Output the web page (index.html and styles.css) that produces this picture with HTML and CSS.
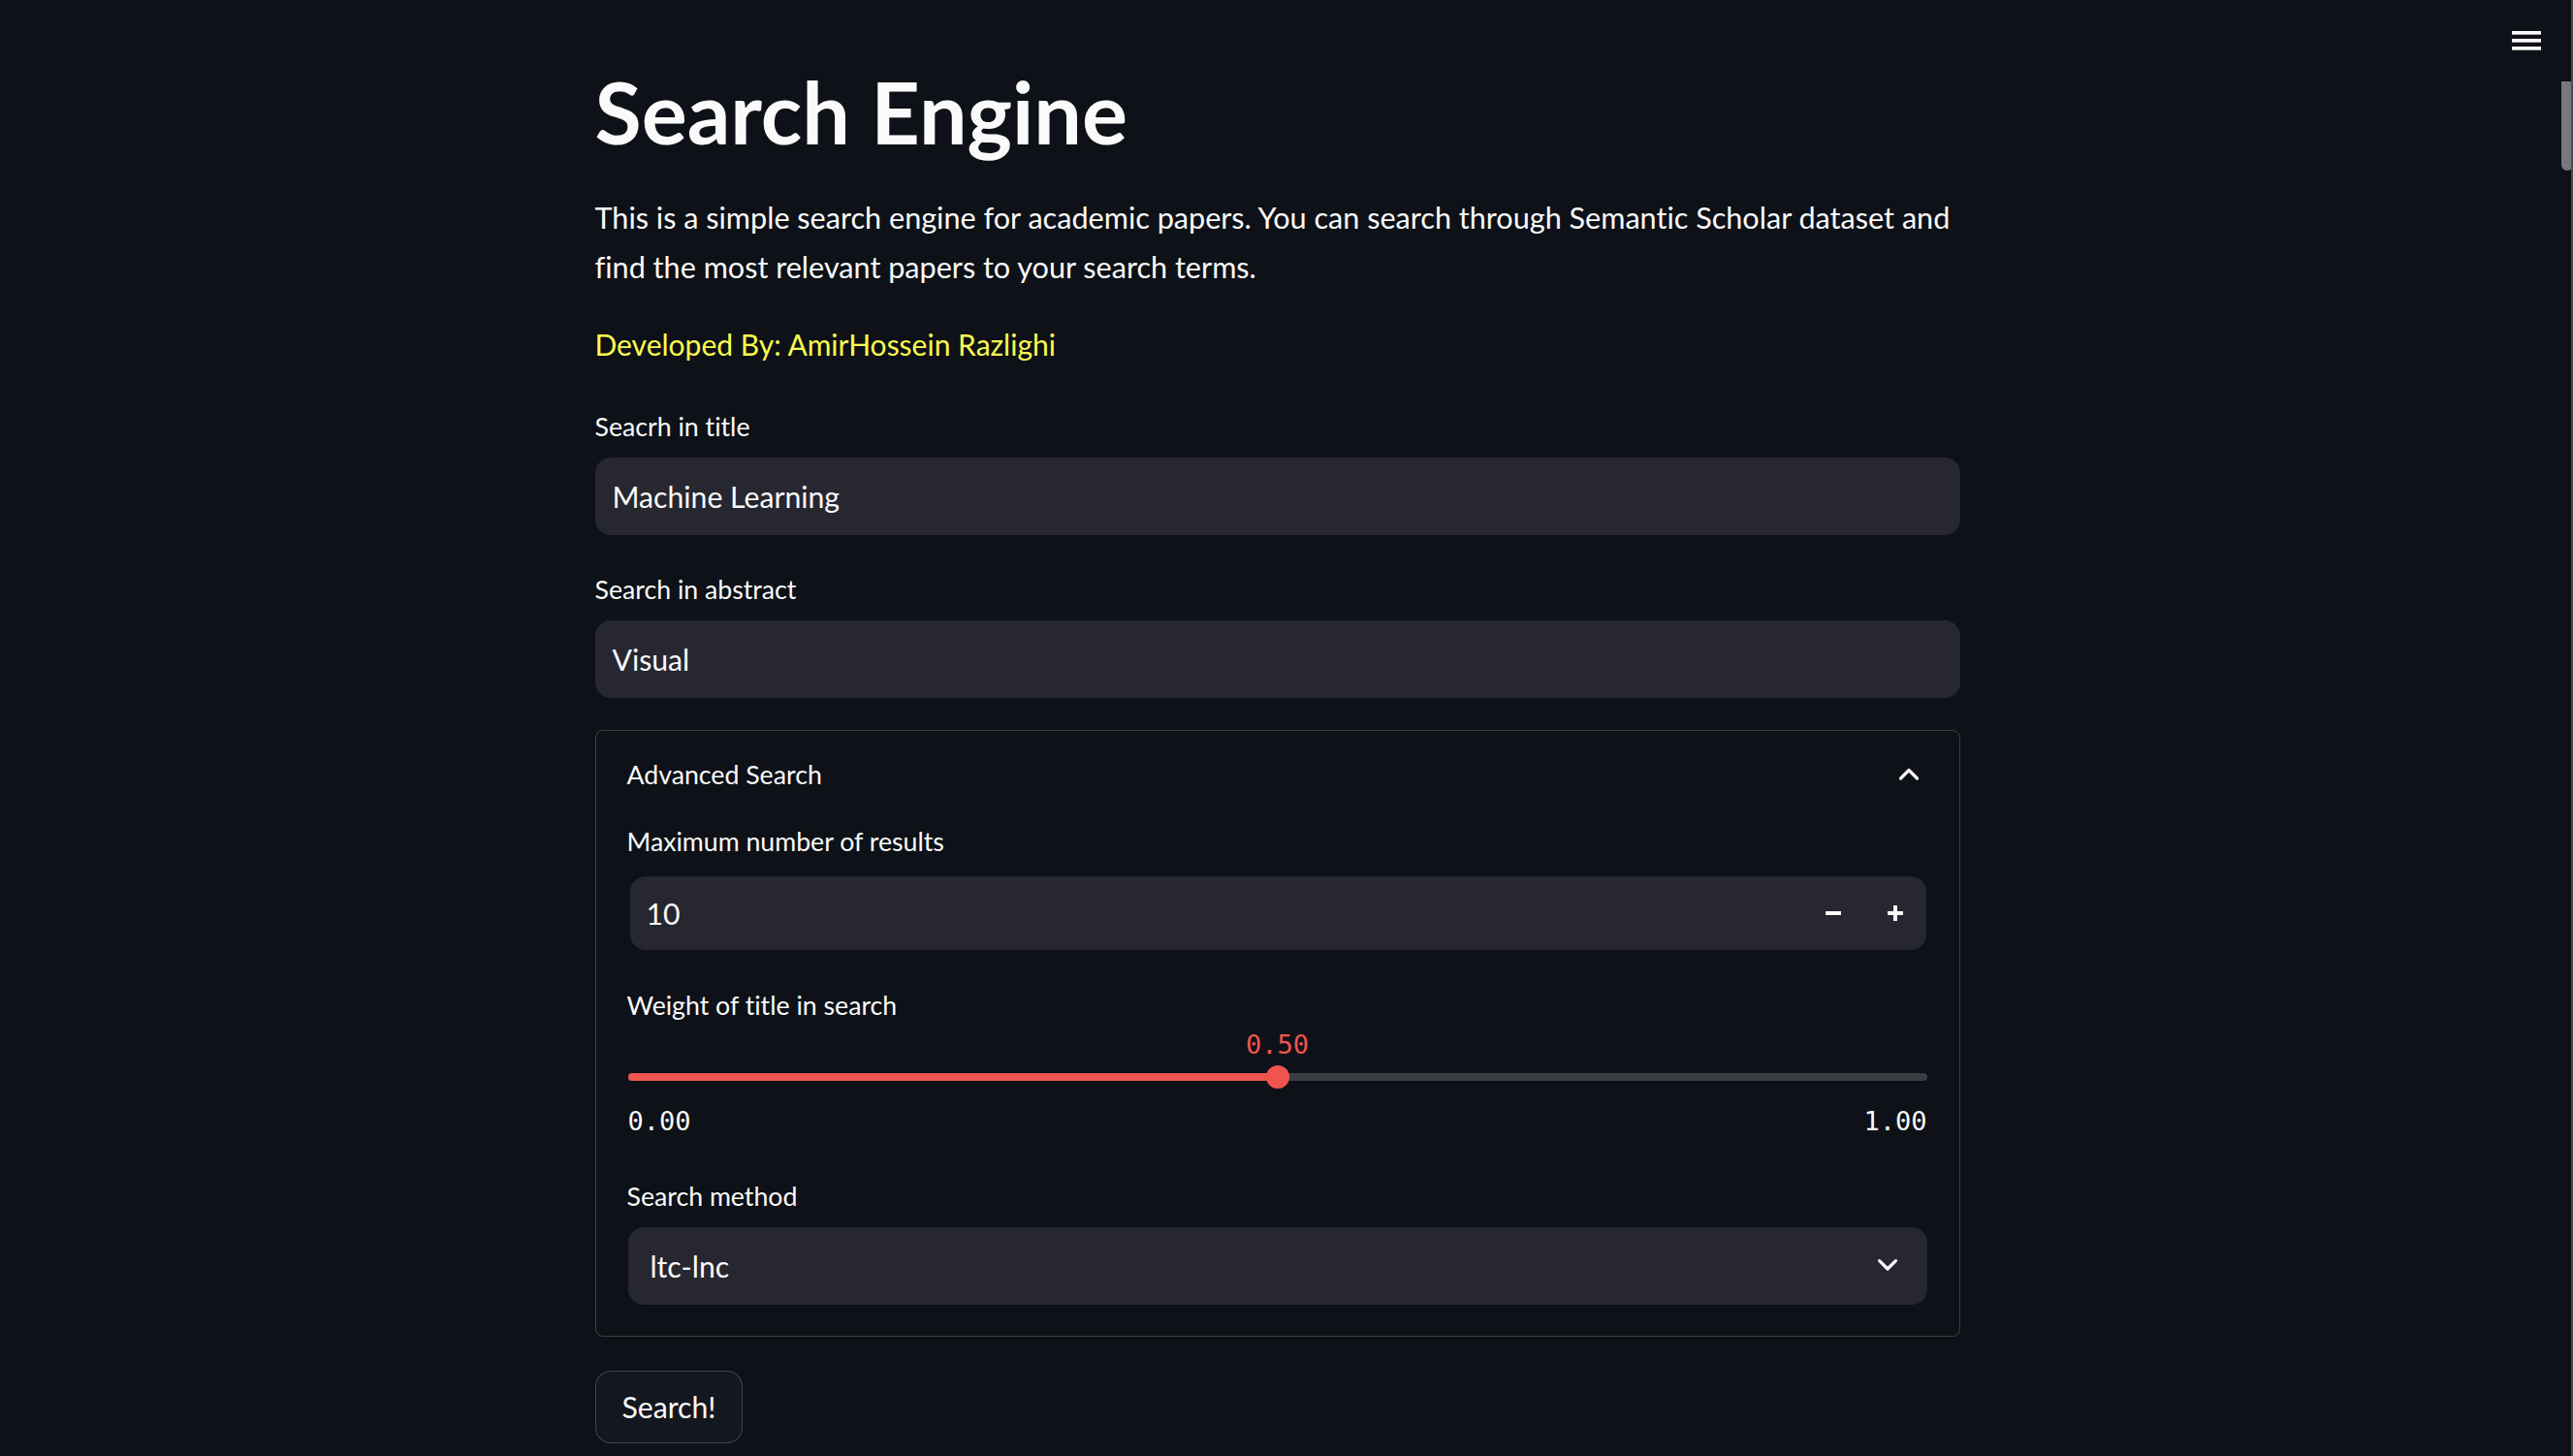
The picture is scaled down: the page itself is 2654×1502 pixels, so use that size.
FILE: index.html
```html
<!DOCTYPE html>
<html lang="en">
<head>
<meta charset="utf-8">
<title>Search Engine</title>
<link rel="stylesheet" href="styles.css">
</head>
<body>
<div class="app">
  <main class="block">
    <h1 class="title">Search Engine</h1>
    <p class="intro">This is a simple search engine for academic papers. You can search through Semantic Scholar dataset and find the most relevant papers to your search terms.</p>
    <p class="author">Developed By: AmirHossein Razlighi</p>

    <div class="field field-first">
      <label class="label">Seacrh in title</label>
      <div class="input">Machine Learning</div>
    </div>
    <div class="field">
      <label class="label">Search in abstract</label>
      <div class="input">Visual</div>
    </div>

    <section class="expander">
      <div class="exp-head">
        <span>Advanced Search</span>
        <svg class="chev" width="40" height="40" viewBox="0 0 40 40"><path d="M11.5 24 L20 15.5 L28.5 24" fill="none" stroke="#fafafa" stroke-width="3.2" stroke-linecap="round" stroke-linejoin="round"/></svg>
      </div>
      <div class="exp-body">
        <div class="field field-tight">
          <label class="label">Maximum number of results</label>
          <div class="number">
            <span class="num-val">10</span>
            <span class="step"><svg width="16" height="16" viewBox="0 0 16 16"><rect x="0" y="6" width="16" height="4" fill="#fafafa"/></svg></span>
            <span class="step"><svg width="16" height="16" viewBox="0 0 16 16"><rect x="0" y="6" width="16" height="4" fill="#fafafa"/><rect x="6" y="0" width="4" height="16" fill="#fafafa"/></svg></span>
          </div>
        </div>
        <div class="field field-slider">
          <label class="label label-slider">Weight of title in search</label>
          <div class="slider">
            <div class="val-row"><span class="thumb-val" style="left:50%">0.50</span></div>
            <div class="track-row">
              <div class="track"><div class="fill" style="width:50%"></div></div>
              <div class="thumb" style="left:50%"></div>
            </div>
            <div class="ticks"><span>0.00</span><span>1.00</span></div>
          </div>
        </div>
        <div class="field field-method">
          <label class="label">Search method</label>
          <div class="select">
            <span>ltc-lnc</span>
            <svg width="20" height="14" viewBox="0 0 20 14"><path d="M1.6 1.6 L10 10 L18.4 1.6" fill="none" stroke="#fafafa" stroke-width="3.2" stroke-linecap="round" stroke-linejoin="round"/></svg>
          </div>
        </div>
      </div>
    </section>

    <button class="btn">Search!</button>
  </main>
</div>

<svg class="menu" width="30" height="20" viewBox="0 0 30 20" aria-label="menu"><rect x="0" y="0" width="30" height="3.7" fill="#fafafa"/><rect x="0" y="8" width="30" height="3.7" fill="#fafafa"/><rect x="0" y="16" width="30" height="3.7" fill="#fafafa"/></svg>
<div class="scrollbar"><div class="sb-thumb"></div></div>
</body>
</html>
```

FILE: styles.css
```css
* { box-sizing: border-box; }
html, body {
  margin: 0;
  padding: 0;
  height: 100%;
  overflow: hidden;
  background: #0e1117;
}
body {
  font-family: "Lato", "Noto Sans", sans-serif;
  font-variant-ligatures: no-common-ligatures;
  color: #fafafa;
}
.app {
  display: flex;
  justify-content: center;
  padding-right: 19px;
}
.block {
  width: 1408px;
  padding-top: 62px;
}
.title {
  margin: 0;
  font-size: 88px;
  font-weight: 700;
  line-height: 106px;
}
.intro {
  margin: 31px 0 0;
  font-size: 30.6px;
  line-height: 51.2px;
}
.author {
  margin: 29px 0 0;
  font-size: 30px;
  line-height: 51.2px;
  color: #fbfb4f;
}
.field { margin-top: 32px; }
.field-first { margin-top: 34px; }
.label {
  display: block;
  font-size: 26.7px;
  line-height: 48px;
  height: 48px;
  margin-bottom: 8px;
}
.input {
  height: 80px;
  background: #262730;
  border-radius: 16px;
  padding: 0 18px;
  display: flex;
  align-items: center;
  font-size: 30.2px;
}
.expander {
  margin-top: 33px;
  border: 1px solid rgba(250, 250, 250, 0.2);
  border-radius: 8px;
}
.exp-head {
  display: flex;
  align-items: center;
  justify-content: space-between;
  padding: 21px 32px 21px 32px;
  height: 90px;
  font-size: 26.7px;
  line-height: 48px;
}
.exp-body { padding: 0 32px 32px; }
.exp-body .field-tight { margin-top: 0; }
.number {
  margin: 12px 2px 0 3px;
  height: 76px;
  background: #262730;
  border-radius: 16px;
  display: flex;
  align-items: center;
  font-size: 30.2px;
}
.num-val { flex: 1; padding-left: 17px; }
.step {
  width: 64px;
  height: 76px;
  display: flex;
  align-items: center;
  justify-content: center;
}
.step svg { display: block; }
.exp-body .field-slider { margin-top: 33px; }
.field .label-slider { margin-bottom: 0; }
.slider { margin: 0 1px; }
.val-row {
  position: relative;
  height: 32px;
  margin-top: 1px;
}
.thumb-val {
  position: absolute;
  top: 0;
  transform: translateX(-50%);
  font-family: "DejaVu Sans Mono", monospace;
  font-size: 27px;
  line-height: 32px;
  color: #f0544f;
}
.track-row {
  position: relative;
  height: 24px;
  margin-top: 5px;
  display: flex;
  align-items: center;
}
.track {
  width: 100%;
  height: 8px;
  border-radius: 4px;
  background: #3b3d45;
  overflow: hidden;
}
.fill {
  height: 100%;
  background: #f0544f;
}
.thumb {
  position: absolute;
  top: 0;
  width: 24px;
  height: 24px;
  margin-left: -12px;
  border-radius: 50%;
  background: #f0544f;
}
.ticks {
  display: flex;
  justify-content: space-between;
  margin-top: 18px;
  font-family: "DejaVu Sans Mono", monospace;
  font-size: 27px;
  line-height: 32px;
}
.exp-body .field-method { margin-top: 37px; }
.select {
  margin: 0 1px;
  height: 80px;
  background: #262730;
  border-radius: 16px;
  display: flex;
  align-items: center;
  justify-content: space-between;
  padding: 0 31px 0 23px;
  font-size: 30.2px;
}
.select svg { display: block; }
.btn {
  display: block;
  margin-top: 35px;
  height: 75px;
  padding: 0 27px;
  border: 1px solid rgba(250, 250, 250, 0.2);
  border-radius: 16px;
  background: #131720;
  color: #fafafa;
  font-family: inherit;
  font-size: 30.2px;
}
.menu {
  position: absolute;
  top: 32px;
  left: 2591px;
  display: block;
}
.scrollbar {
  position: absolute;
  top: 0;
  right: 0;
  width: 12px;
  height: 100%;
}
.scrollbar::after {
  content: "";
  position: absolute;
  right: 0;
  top: 0;
  width: 2px;
  height: 100%;
  background: #4a4b52;
}
.sb-thumb {
  position: absolute;
  top: 84px;
  left: 0;
  width: 12px;
  height: 92px;
  border-radius: 0 0 6px 6px;
  background: #77787e;
}
```
